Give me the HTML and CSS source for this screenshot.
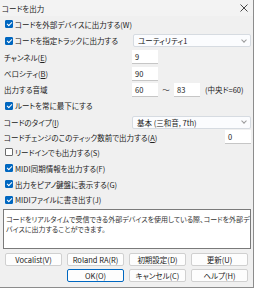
FILE: index.html
```html
<!DOCTYPE html>
<html lang="ja">
<head>
    <meta charset="UTF-8">
    <title>コードを出力</title>
    <link rel="stylesheet" href="styles.css">
</head>
<body>
    <div class="dialog">
        <div class="titlebar">
            <span class="title">コードを出力</span>
            <svg class="close" width="8" height="8" viewBox="0 0 8 8"><path d="M0.5 0.5 L7.5 7.5 M7.5 0.5 L0.5 7.5" stroke="#333" stroke-width="0.9" fill="none"/></svg>
        </div>

        <div class="form">
            <div class="row r16">
                <label class="check"><span class="box on"></span>コードを外部デバイスに出力する(W)</label>
            </div>
            <div class="row r17 split">
                <label class="check"><span class="box on"></span>コードを指定トラックに出力する</label>
                <div class="select">ユーティリティ1<span class="chev"></span></div>
            </div>
            <div class="row r16 split">
                <span class="label">チャンネル(<u>E</u>)</span>
                <div class="field">9</div>
            </div>
            <div class="row r17 split">
                <span class="label">ベロシティ(<u>B</u>)</span>
                <div class="field">90</div>
            </div>
            <div class="row r15 split">
                <span class="label">出力する音域</span>
                <div class="range">
                    <div class="field">60</div>
                    <span class="tilde">～</span>
                    <div class="field">83</div>
                    <span class="note">(中央ド=60)</span>
                </div>
            </div>
            <div class="row r17">
                <label class="check"><span class="box on"></span>ルートを常に最下にする</label>
            </div>
            <div class="row r16 split">
                <span class="label">コードのタイプ(<u>I</u>)</span>
                <div class="select">基本 (三和音, 7th)<span class="chev"></span></div>
            </div>
            <div class="row r14 between">
                <span class="label">コードチェンジのこのティック数前で出力する(<u>A</u>)</span>
                <div class="field">0</div>
            </div>
            <div class="row r16">
                <label class="check"><span class="box"></span>リードインでも出力する(S)</label>
            </div>
            <div class="row r16">
                <label class="check"><span class="box on"></span>MIDI同期情報を出力する(F)</label>
            </div>
            <div class="row r16">
                <label class="check"><span class="box on"></span>出力をピアノ鍵盤に表示する(G)</label>
            </div>
            <div class="row r15">
                <label class="check"><span class="box on"></span>MIDIファイルに書き出す(J)</label>
            </div>
        </div>

        <div class="desc">コードをリアルタイムで受信できる外部デバイスを使用している際、コードを外部デ<br>バイスに出力することができます。</div>

        <div class="buttons">
            <button>Vocalist(V)</button>
            <button>Roland RA(R)</button>
            <button>初期設定(D)</button>
            <button>更新(U)</button>
            <span></span>
            <button class="default">OK(O)</button>
            <button>キャンセル(C)</button>
            <button>ヘルプ(H)</button>
        </div>
    </div>
</body>
</html>
```

FILE: styles.css
```css
body {
    margin: 0;
    background-color: #f0f0f0;
    font-family: "Noto Sans CJK JP", "Noto Sans", sans-serif;
    font-feature-settings: "palt";
    font-size: 7.5px;
    color: #222;
}

.dialog {
    width: 253px;
    height: 287px;
    border: 1px solid #8c8c8c;
    border-top: none;
    border-left: none;
    background-color: #f0f0f0;
    overflow: hidden;
}

.titlebar {
    height: 16px;
    display: flex;
    align-items: center;
    justify-content: space-between;
    padding: 0 5px 0 2px;
    background-color: #f3f3f3;
}

.title {
    font-size: 7.5px;
}

.form {
    padding: 0 2px 0 4px;
}

.row {
    display: flex;
    align-items: center;
}

.r14 { height: 14px; }
.r15 { height: 15px; }
.r16 { height: 16px; }
.r17 { height: 17px; }

.split > :first-child {
    width: 128px;
    flex: none;
}

.between {
    justify-content: space-between;
}

.check {
    display: flex;
    align-items: center;
    margin-left: 1px;
}

.box {
    width: 6px;
    height: 6px;
    margin-right: 2px;
    border: 1px solid #6b6b6b;
    border-radius: 1px;
    background-color: #fff;
    position: relative;
}

.box.on {
    background-color: #0067c0;
    border-color: #0067c0;
}

.box.on::after {
    content: "";
    position: absolute;
    left: 2px;
    top: 0;
    width: 2px;
    height: 4px;
    border: solid #fff;
    border-width: 0 1px 1px 0;
    transform: rotate(45deg);
}

u {
    text-decoration: underline;
}

.select {
    width: 119px;
    height: 13px;
    box-sizing: border-box;
    background-color: #fbfcfe;
    border: 1px solid #d6dbe1;
    border-radius: 2px;
    padding-left: 4px;
    display: flex;
    align-items: center;
    justify-content: space-between;
}

.chev {
    width: 3px;
    height: 3px;
    margin: 0 4px 2px 0;
    border: solid #9a9a9a;
    border-width: 0 1px 1px 0;
    transform: rotate(45deg);
}

.field {
    width: 26px;
    height: 14px;
    box-sizing: border-box;
    background-color: #fff;
    border-bottom: 1px solid #c6c6c6;
    padding-left: 3px;
    display: flex;
    align-items: center;
}

.range {
    display: flex;
    align-items: center;
}

.tilde {
    width: 16px;
    text-align: center;
}

.note {
    margin-left: 5px;
}

.desc {
    margin: 2px 2px 0 3px;
    height: 40px;
    box-sizing: border-box;
    border: 1px solid #7a7a7a;
    background-color: #fff;
    padding: 4px 2px;
    font-size: 7px;
    line-height: 10px;
    color: #333;
    white-space: nowrap;
    overflow: hidden;
}

.buttons {
    display: grid;
    grid-template-columns: repeat(4, 57px);
    column-gap: 5px;
    row-gap: 3px;
    padding: 4px 0 0 5px;
}

button {
    height: 13px;
    padding: 0;
    font-family: inherit;
    font-feature-settings: "palt";
    font-size: 7.5px;
    color: #222;
    background-color: #fdfdfd;
    border: 1px solid #d0d0d0;
    border-radius: 2px;
}

button.default {
    border-color: #0067c0;
}
```
